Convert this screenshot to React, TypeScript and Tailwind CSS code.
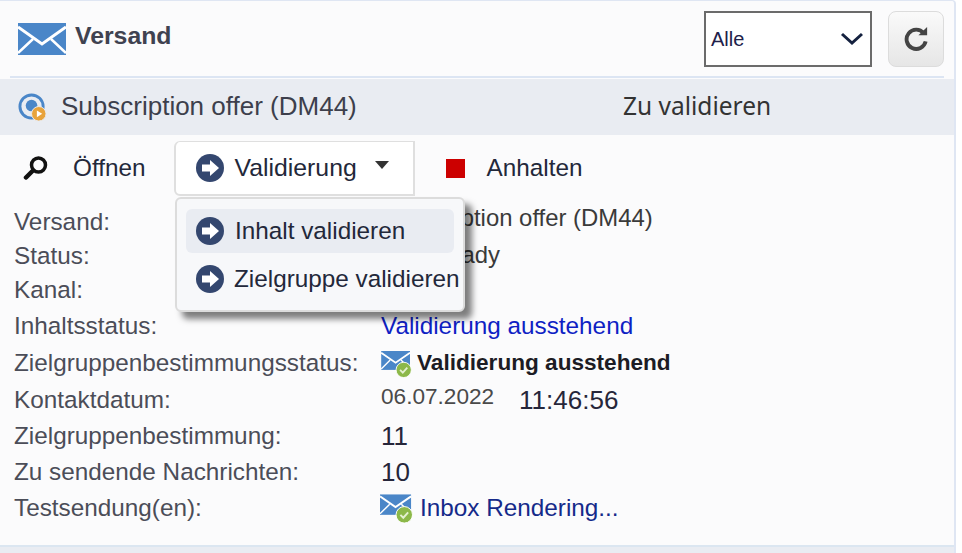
import React from 'react';

const sans = "font-['Liberation_Sans',Arial,sans-serif]";

const Envelope = ({ className }: { className: string }) => (
  <svg viewBox="0 0 48 32" className={className}>
    <rect width="48" height="32" fill="#4a86c8" />
    <path d="M0 4 L24 21 L48 4" fill="none" stroke="#fff" strokeWidth="3" />
    <path d="M0 30 L15 16 M48 30 L33 16" fill="none" stroke="#fff" strokeWidth="2.5" />
  </svg>
);

const EnvelopeCheck = ({ className }: { className: string }) => (
  <svg viewBox="0 0 34 30" className={className}>
    <rect x="0" y="0" width="32" height="21" fill="#4a86c8" />
    <path d="M0 2 L16 13 L32 2" fill="none" stroke="#fff" strokeWidth="2" />
    <path d="M0 20 L10 10 M32 20 L22 10" fill="none" stroke="#fff" strokeWidth="1.5" />
    <circle cx="25" cy="21" r="8.5" fill="#8cb849" stroke="#fff" strokeWidth="1" />
    <path d="M21 21 L24 24 L29 18.5" fill="none" stroke="#e4f0d0" strokeWidth="2" />
  </svg>
);

const ArrowCircle = () => (
  <svg viewBox="0 0 28 28" className="w-7 h-7 shrink-0">
    <circle cx="14" cy="14" r="14" fill="#34476f" />
    <path d="M6 10.5 H14 V6 L23 14 L14 22 V17.5 H6 Z" fill="#fff" />
  </svg>
);

const rows: { label: string; h: string; value?: React.ReactNode }[] = [
  { label: 'Versand:', h: 'h-[34px]', value: <span className="text-[#3a3a3a] text-[23.9px] -mt-[8px]">Subscription offer (DM44)</span> },
  { label: 'Status:', h: 'h-[34px]', value: <span className="text-[#3a3a3a] text-[23.9px] -mt-[2px]">Offer ready</span> },
  { label: 'Kanal:', h: 'h-[35px]' },
  { label: 'Inhaltsstatus:', h: 'h-[36px]', value: <span className="text-[#0f1fc4]">Validierung ausstehend</span> },
  {
    label: 'Zielgruppenbestimmungsstatus:',
    h: 'h-[38px]',
    value: (
      <span className="flex items-center gap-[5px] font-bold text-[#1c1c24] text-[22.6px]">
        <EnvelopeCheck className="w-[31px] h-[27px] mt-[3px]" />
        Validierung ausstehend
      </span>
    ),
  },
  {
    label: 'Kontaktdatum:',
    h: 'h-[37px]',
    value: (
      <span className="flex gap-[25px] text-[#4a4a4a] items-center text-[22.6px] -mt-[4px]">
        <span className="-mt-[3px]">06.07.2022</span>
        <span className="text-[#26263a] text-[26px] mt-1">11:46:56</span>
      </span>
    ),
  },
  { label: 'Zielgruppenbestimmung:', h: 'h-[35px]', value: <span className="text-[#26263a] text-[26px]">11</span> },
  { label: 'Zu sendende Nachrichten:', h: 'h-[37px]', value: <span className="text-[#26263a] text-[26px]">10</span> },
  {
    label: 'Testsendung(en):',
    h: 'h-[35px]',
    value: (
      <span className="flex items-center gap-[7px] text-[#152a8a] -ml-[1px]">
        <EnvelopeCheck className="w-[33px] h-[30px]" />
        Inbox Rendering...
      </span>
    ),
  },
];

export default function App() {
  return (
    <div className={`${sans} w-[962px] h-[553px] bg-white overflow-hidden text-[#2c2c38]`}>
      <div className="w-[956px] h-full bg-[#fbfbfc] border-t border-r-2 border-[#dfe6f3] rounded-tr-[4px] flex flex-col">
        <div className="h-[77px] shrink-0 mx-[10px] border-b-2 border-[#dce5f3] flex items-center pl-2">
          <Envelope className="w-[48px] h-[32px]" />
          <span className="ml-[9px] font-bold text-[24.8px] text-[#3f4250] -mt-[5px]">Versand</span>
          <div className="ml-auto flex items-center gap-[16px]">
            <div className="w-[168px] h-[56px] border-2 border-[#6b6b6b] bg-white flex items-center justify-between pl-[5px] pr-[6px]">
              <span className="text-[20px] text-[#20204a]">Alle</span>
              <svg viewBox="0 0 24 14" className="w-[24px] h-[14px]">
                <path d="M2 2 L12 11 L22 2" fill="none" stroke="#14213f" strokeWidth="3" />
              </svg>
            </div>
            <button className="w-[56px] h-[56px] rounded-[8px] border border-[#dcdcdc] bg-gradient-to-b from-[#fafafa] to-[#e6e6e6] flex items-center justify-center">
              <svg viewBox="0 0 28 28" className="w-[27px] h-[27px]">
                <path d="M21.5 8.5 A10 10 0 1 0 23.5 17" fill="none" stroke="#444" strokeWidth="4" />
                <path d="M16 10.5 H25 V2 Z" fill="#444" />
              </svg>
            </button>
          </div>
        </div>
        <div className="h-[56px] shrink-0 mt-[1px] bg-[#e9ecf2] flex items-center pl-[18px]">
          <svg viewBox="0 0 30 30" className="w-[29px] h-[29px]">
            <circle cx="14" cy="14" r="12" fill="none" stroke="#4a86c8" strokeWidth="3" />
            <circle cx="14" cy="13" r="6" fill="#4a86c8" />
            <circle cx="21.5" cy="21.5" r="7.5" fill="#e8a33c" stroke="#e9ecf2" strokeWidth="1" />
            <path d="M19.5 18 L25 21.5 L19.5 25 Z" fill="#fff" />
          </svg>
          <span className="ml-[14px] text-[26px] text-[#3d3f4c] w-[562px] -mt-[2px]">Subscription offer (DM44)</span>
          <span className="font-['Noto_Sans',sans-serif] text-[24.5px] text-[#333] -mt-[2px]">Zu validieren</span>
        </div>
        <div className="relative h-[410px] shrink-0 px-[14px]">
          <div className="flex items-start h-[72px] text-[24.3px]">
            <div className="flex items-center h-[62px] pl-[9px] mt-[2px]">
              <svg viewBox="0 0 26 26" className="w-[26px] h-[26px]">
                <circle cx="15.5" cy="10" r="7" fill="none" stroke="#111" strokeWidth="3.5" />
                <path d="M10 15.5 L3 22.5" stroke="#111" strokeWidth="4.5" strokeLinecap="round" />
              </svg>
              <span className="ml-[24px] text-[#23283a]">Öffnen</span>
            </div>
            <div className="ml-[28px] mt-[6px] w-[241px] h-[55px] bg-white border-2 border-t border-[#dfdfdf] rounded-tl-[6px] rounded-bl-[6px] flex items-center pl-[20px]">
              <ArrowCircle />
              <span className="ml-[11px] text-[#23283a] text-[24.8px]">Validierung</span>
              <span className="ml-[18px] -mt-[6px] w-0 h-0 border-x-[7px] border-x-transparent border-t-[8px] border-t-[#333]" />
            </div>
            <div className="flex items-center h-[62px] ml-[31px] mt-[2px]">
              <span className="w-[19px] h-[19px] bg-[#cc0000]" />
              <span className="ml-[22px] text-[#23283a]">Anhalten</span>
            </div>
          </div>
          <div className="text-[24.3px] -mt-[2px]">
            {rows.map((row) => (
              <div key={row.label} className={`flex items-center ${row.h}`}>
                <span className="w-[367px] shrink-0 text-[#4b4d58]">{row.label}</span>
                {row.value}
              </div>
            ))}
          </div>
          <div className="absolute left-[175px] top-[62px] w-[290px] h-[115px] bg-[#f7f8fa] border-2 border-[#dcdcdc] rounded-[6px] shadow-[7px_7px_6px_rgba(0,0,0,0.5)] py-[10px] px-[9px] text-[24.3px]">
            <div className="h-[44px] rounded-[6px] bg-[#e9ecf2] flex items-center pl-[10px]">
              <ArrowCircle />
              <span className="ml-[11px] text-[#23283a]">Inhalt validieren</span>
            </div>
            <div className="h-[44px] mt-[4px] flex items-center pl-[10px]">
              <ArrowCircle />
              <span className="ml-[10px] text-[#23283a] whitespace-nowrap">Zielgruppe validieren</span>
            </div>
          </div>
        </div>
        <div className="flex-1 border-t-2 border-[#dbe6f1] bg-[#e9ecf2]" />
      </div>
    </div>
  );
}
